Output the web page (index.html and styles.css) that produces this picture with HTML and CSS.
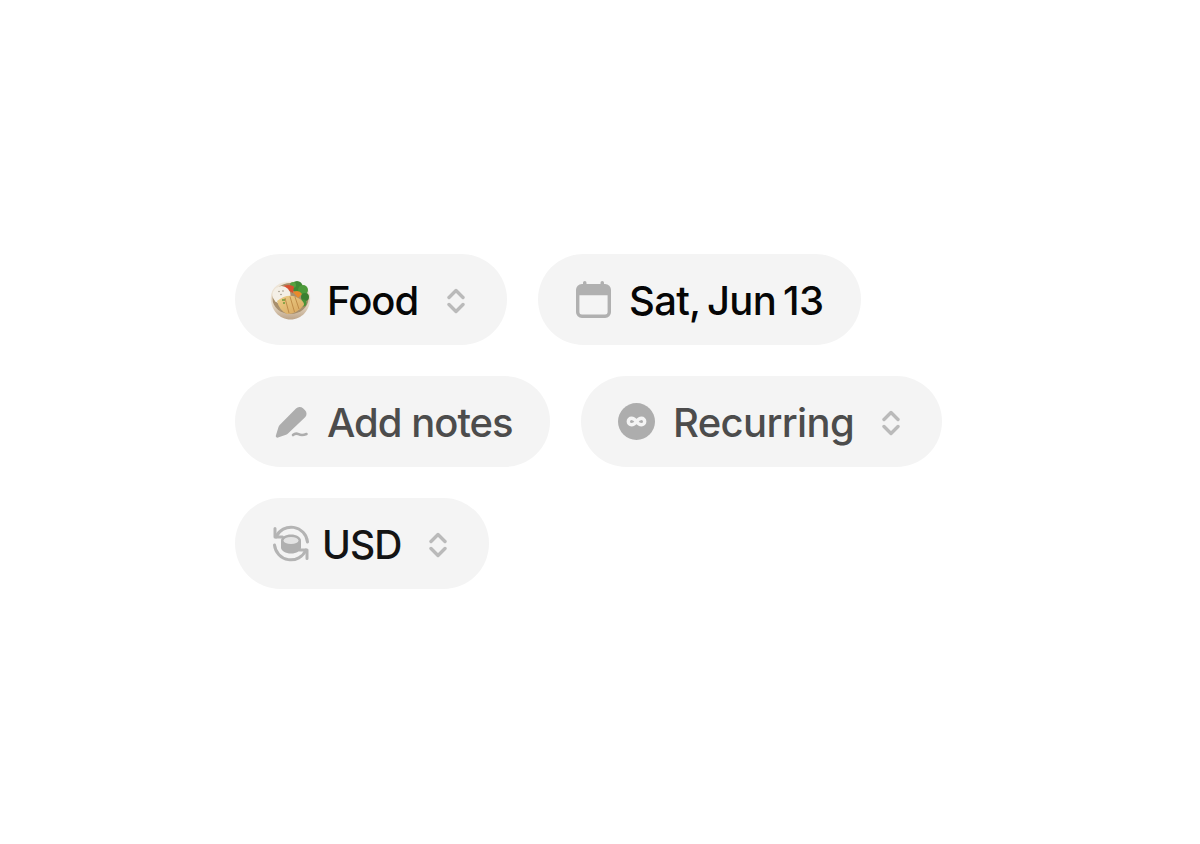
FILE: index.html
```html
<!DOCTYPE html>
<html lang="en">
<head>
<meta charset="utf-8">
<title>Expense filters</title>
<link rel="stylesheet" href="styles.css">
</head>
<body>
<main class="stack">
  <div class="row">
    <div class="pill pill-food">
      <svg class="icon bowl" width="42" height="40" viewBox="0 0 42 40">
        <defs>
          <linearGradient id="rim" x1="0" y1="0" x2="0" y2="1"><stop offset="0" stop-color="#efe7da"/><stop offset="0.6" stop-color="#e6d9c6"/><stop offset="1" stop-color="#bda488"/></linearGradient>
          <linearGradient id="chicken" x1="0" y1="0" x2="1" y2="1"><stop offset="0" stop-color="#ecd08a"/><stop offset="1" stop-color="#d8a55c"/></linearGradient>
        </defs>
        <path d="M.8 18C.8 7 9.500 1.500 20.500 1.500S40.200 7 40.200 18c0 12-8.500 21.500-19.700 21.500S.8 30 .8 18Z" fill="url(#rim)"/>
        <ellipse cx="20.500" cy="18.500" rx="18" ry="15.500" fill="#a88f6c"/>
        <circle cx="27" cy="6.500" r="5.500" fill="#3f8a35"/>
        <circle cx="33" cy="10" r="5" fill="#4c9a3a"/>
        <circle cx="35" cy="17" r="4" fill="#3b8030"/>
        <circle cx="33" cy="23" r="3.500" fill="#4a9238"/>
        <circle cx="23" cy="5" r="3" fill="#56a040"/>
        <path d="M12 7 Q17 3.500 24 6.500 L23 13 Q17 9 13 11Z" fill="#d8502f"/>
        <path d="M23 12 Q29 9 32 14 L28 18 Z" fill="#e88a2c"/>
        <ellipse cx="11.500" cy="15" rx="9" ry="9" fill="#f4efe6"/>
        <circle cx="9" cy="11.500" r=".7" fill="#8a8070"/><circle cx="13" cy="11" r=".7" fill="#8a8070"/><circle cx="11" cy="14.500" r=".7" fill="#8a8070"/>
        <path d="M7 21 Q17 13 26 17 Q34 20 34 25 Q27 34 17 34 Q9 30 7 21Z" fill="url(#chicken)"/>
        <path d="M15 18 L19 33 M20 16.500 L24.500 32 M25 17 L29 29" stroke="#c08c48" stroke-width="1" fill="none"/>
        <path d="M12 20h3M13 23h2" stroke="#6d9a3a" stroke-width="1.500" fill="none"/>
      </svg>
      <span class="label label-black label-food">Food</span>
      <svg class="chevrons" width="18" height="26" viewBox="0 0 18 26"><path d="M2 9.500 9 2.500l7 7M2 16.500l7 7 7-7"/></svg>
    </div>
    <div class="pill pill-date">
      <svg class="icon" width="35" height="37" viewBox="0 0 36 38">
        <path fill-rule="evenodd" fill="#b0b0b0" d="M9 0a1.800 1.800 0 0 1 1.800 1.800V3h14.400V1.800a1.800 1.800 0 0 1 3.600 0V3H30a6 6 0 0 1 6 6v23a6 6 0 0 1-6 6H6a6 6 0 0 1-6-6V9a6 6 0 0 1 6-6h1.200V1.800A1.800 1.800 0 0 1 9 0ZM3.500 14.500V32A2.500 2.500 0 0 0 6 34.500h24a2.500 2.500 0 0 0 2.500-2.500V14.500Z"/>
      </svg>
      <span class="label label-black label-date">Sat, Jun 13</span>
    </div>
  </div>
  <div class="row">
    <div class="pill pill-notes">
      <svg class="icon" width="34" height="34" viewBox="0 0 34 34">
        <path fill="#adadad" d="M21 3.500a5 5 0 0 1 7-.2l2 1.900a5 5 0 0 1 .1 7.100L13 28.500a5 5 0 0 1-2 1.200L3 32.600a1.600 1.600 0 0 1-2.100-2L3.500 22a5 5 0 0 1 1.200-2Z"/>
        <path fill="none" stroke="#adadad" stroke-width="2.600" stroke-linecap="round" d="M18 30c2-1.800 3.500-1.800 5.500-.8s4 1.500 8-.2"/>
      </svg>
      <span class="label label-gray label-notes">Add notes</span>
    </div>
    <div class="pill pill-recurring">
      <svg class="icon" width="37" height="37" viewBox="0 0 37 37">
        <circle cx="18.500" cy="18.500" r="18.500" fill="#adadad"/>
        <path fill="none" stroke="#f4f4f4" stroke-width="3.400" d="M18.500 18.500c-1.700-2.300-3-3.200-5-3.200a3.200 3.200 0 0 0 0 6.400c2 0 3.300-.9 5-3.200s3-3.200 5-3.200a3.200 3.200 0 0 1 0 6.400c-2 0-3.300-.9-5-3.200Z"/>
      </svg>
      <span class="label label-gray label-recurring">Recurring</span>
      <svg class="chevrons" width="18" height="26" viewBox="0 0 18 26"><path d="M2 9.500 9 2.500l7 7M2 16.500l7 7 7-7"/></svg>
    </div>
  </div>
  <div class="row">
    <div class="pill pill-usd">
      <svg class="icon" width="38" height="37" viewBox="0 0 38 37">
        <g fill="none" stroke="#b4b4b4" stroke-width="3" stroke-linecap="round" stroke-linejoin="round">
          <path d="M4 12A16.500 16.500 0 0 1 35.500 17"/>
          <path d="M34 25A16.500 16.500 0 0 1 2.500 20"/>
          <path d="M3 3.500V12h7.500"/>
          <path d="M35 33.500V25h-7.500"/>
        </g>
        <path fill="#b0b0b0" d="M9 15.500c0-3.300 4.500-6 10-6s10 2.700 10 6v7c0 3.300-4.500 6-10 6s-10-2.700-10-6Z"/>
        <ellipse cx="19" cy="15.500" rx="7.500" ry="3.600" fill="#e4e4e4"/>
      </svg>
      <span class="label label-black2 label-usd">USD</span>
      <svg class="chevrons" width="18" height="26" viewBox="0 0 18 26"><path d="M2 9.500 9 2.500l7 7M2 16.500l7 7 7-7"/></svg>
    </div>
  </div>
</main>
</body>
</html>
```
FILE: styles.css
```css
html, body {
  margin: 0;
  background: #fff;
}
body {
  width: 1200px;
  height: 844px;
  overflow: hidden;
  font-family: Inter, "Liberation Sans", sans-serif;
}
.stack {
  display: flex;
  flex-direction: column;
  gap: 31px;
  padding: 254px 0 0 235px;
}
.row {
  display: flex;
  gap: 31px;
}
.pill {
  display: flex;
  align-items: center;
  height: 91px;
  box-sizing: border-box;
  border-radius: 46px;
  background: #f4f4f4;
  padding-left: 35px;
}
.icon { flex: none; display: block; }
.label {
  font-size: 40px;
  font-weight: 500;
  line-height: 48px;
  padding-top: 2px;
  white-space: nowrap;
}
.label-black { color: #060606; }
.label-black2 { color: #141414; }
.label-gray { color: #4c4c4c; }
.label-food { letter-spacing: -1px; }
.label-date { letter-spacing: -0.7px; word-spacing: -3px; }
.label-notes { letter-spacing: -1px; }
.label-recurring { letter-spacing: -0.65px; }
.label-usd { font-size: 39px; letter-spacing: -0.9px; }
.chevrons {
  flex: none;
  margin-top: 3px;
  fill: none;
  stroke: #bababa;
  stroke-width: 3.4;
  stroke-linecap: round;
  stroke-linejoin: round;
}
.pill-food { width: 272px; }
.pill-food .label { margin-left: 15px; }
.pill-food .chevrons { margin-left: 29px; }
.pill-date { width: 323px; padding-left: 38px; }
.pill-date .label { margin-left: 18px; }
.pill-notes { width: 315px; padding-left: 40px; }
.pill-notes .label { margin-left: 18px; }
.pill-recurring { width: 361px; padding-left: 37px; }
.pill-recurring .label { margin-left: 18px; }
.pill-recurring .chevrons { margin-left: 28px; }
.pill-usd { width: 254px; padding-left: 37px; }
.pill-usd .label { margin-left: 12px; }
.pill-usd .chevrons { margin-left: 27px; }
```
